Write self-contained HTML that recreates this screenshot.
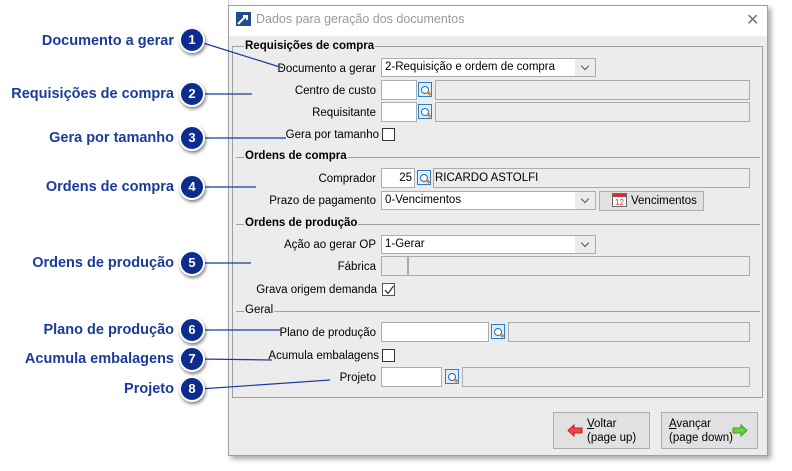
<!DOCTYPE html>
<html><head><meta charset="utf-8"><style>
*{box-sizing:border-box;margin:0;padding:0}
body{width:792px;height:471px;background:#fff;position:relative;overflow:hidden;font-family:"Liberation Sans",sans-serif;font-size:11.5px;color:#000}
.a{position:absolute}
.dlg{left:228px;top:5px;width:540px;height:451px;background:#ececec;border:1px solid #a0a0a0;box-shadow:3px 3px 5px rgba(0,0,0,.35)}
.title{left:229px;top:6px;width:538px;height:30px;background:#fff}
.lbl{position:absolute;text-align:right;width:200px;line-height:14px}
.in{position:absolute;background:#fff;border:1px solid #acacac}
.ro{position:absolute;background:#ececec;border:1px solid #acacac}
.combo{position:absolute;background:#fff;border:1px solid #acacac;padding-left:3px;line-height:16px}
.combo:after{content:"";position:absolute;right:7px;top:4px;width:5px;height:5px;border-right:1px solid #555;border-bottom:1px solid #555;transform:rotate(45deg)}
.combo i{position:absolute;right:0;top:0;bottom:0;width:20px;background:#ececec}
.mag{position:absolute;width:14px;height:15px;border:1px solid #2a7fd4;background:#dbeefc}
.mag:before{content:"";position:absolute;left:2px;top:3px;width:6px;height:6px;border:1.5px solid #2a66b0;border-radius:50%;background:#fff}
.mag:after{content:"";position:absolute;left:8px;top:9px;width:4px;height:3px;background:#e08a20;transform:rotate(45deg)}
.cb{position:absolute;width:13px;height:13px;border:1px solid #333;background:#fff}
.sec{position:absolute;font-weight:bold;background:#ececec;padding:0 1px;line-height:13px}
.hl{position:absolute;height:1px;background:#a0a0a0}
.co{position:absolute;right:618px;color:#1a3b9e;font-weight:bold;font-size:14.5px;white-space:nowrap;line-height:18px}
.bd{position:absolute;width:26px;height:26px;border-radius:50%;background:#0c2d8e;border:2px solid #fff;box-shadow:1px 2px 3px rgba(0,0,0,.5);color:#fff;font-weight:bold;font-size:13px;text-align:center;line-height:22px}
.btn{position:absolute;background:#e1e1e1;border:1px solid #adadad;line-height:14px}
</style></head><body>
<div class="a" style="left:228px;top:0;width:540px;height:5px;border-left:1px dotted #aaa"></div>
<div class="a dlg"></div>
<div class="a title"></div>
<svg class="a" style="left:236px;top:12px" width="15" height="14"><rect width="15" height="14" fill="#1e4e8c"/><path d="M2 12 L10 4 M7 4 H11 V8" stroke="#fff" stroke-width="2" fill="none"/></svg>
<div class="a" style="left:256px;top:12px;color:#999;font-size:12.5px">Dados para geração dos documentos</div>
<div class="a" style="left:746px;top:10px;color:#777;font-size:16px">✕</div>

<div class="a" style="left:232px;top:46px;width:531px;height:352px;border:1px solid #a0a0a0"></div>
<div class="sec" style="left:244px;top:40px">Requisições de compra</div>
<div class="hl" style="left:236px;top:157px;width:524px"></div>
<div class="sec" style="left:244px;top:150px">Ordens de compra</div>
<div class="hl" style="left:236px;top:224px;width:524px"></div>
<div class="sec" style="left:244px;top:217px">Ordens de produção</div>
<div class="hl" style="left:236px;top:311px;width:524px"></div>
<div class="sec" style="left:244px;top:304px;font-weight:normal">Geral</div>

<div class="lbl" style="left:176px;top:62px">Documento a gerar</div>
<div class="combo" style="left:381px;top:58px;width:215px;height:19px">2-Requisição e ordem de compra<i></i></div>
<div class="lbl" style="left:176px;top:84px">Centro de custo</div>
<div class="in" style="left:381px;top:80px;width:36px;height:20px"></div><div class="mag" style="left:418px;top:82px"></div><div class="ro" style="left:435px;top:80px;width:315px;height:20px"></div>
<div class="lbl" style="left:176px;top:106px">Requisitante</div>
<div class="in" style="left:381px;top:102px;width:36px;height:20px"></div><div class="mag" style="left:418px;top:104px"></div><div class="ro" style="left:435px;top:102px;width:315px;height:20px"></div>
<div class="lbl" style="left:179px;top:128px">Gera por tamanho</div>
<div class="cb" style="left:382px;top:128px"></div>

<div class="lbl" style="left:176px;top:172px">Comprador</div>
<div class="in" style="left:381px;top:168px;width:34px;height:20px;text-align:right;padding-right:2px;line-height:18px">25</div><div class="mag" style="left:417px;top:170px"></div><div class="ro" style="left:433px;top:168px;width:317px;height:20px;padding-left:1px;line-height:18px">RICARDO ASTOLFI</div>
<div class="lbl" style="left:176px;top:194px">Prazo de pagamento</div>
<div class="combo" style="left:381px;top:191px;width:215px;height:19px">0-Vencimentos<i></i></div>
<div class="btn" style="left:599px;top:191px;width:105px;height:20px;padding:2px 0 0 31px">Vencimentos</div>
<svg class="a" style="left:612px;top:192px" width="15" height="15"><rect x="0.5" y="1.5" width="14" height="13" fill="#fff" stroke="#666"/><rect x="1" y="2" width="13" height="3" fill="#c33"/><text x="3" y="13" font-size="8" fill="#c33" font-family="Liberation Sans">12</text></svg>

<div class="lbl" style="left:176px;top:238px">Ação ao gerar OP</div>
<div class="combo" style="left:381px;top:235px;width:215px;height:19px">1-Gerar<i></i></div>
<div class="lbl" style="left:176px;top:260px">Fábrica</div>
<div class="ro" style="left:381px;top:256px;width:27px;height:20px"></div><div class="ro" style="left:408px;top:256px;width:342px;height:20px"></div>
<div class="lbl" style="left:177px;top:283px">Grava origem demanda</div>
<div class="cb" style="left:382px;top:283px;border-color:#555"></div>
<svg class="a" style="left:383px;top:284px" width="12" height="12"><path d="M2 6 L5 9.5 L10.5 2" stroke="#333" stroke-width="1.3" fill="none"/></svg>

<div class="lbl" style="left:176px;top:326px">Plano de produção</div>
<div class="in" style="left:381px;top:322px;width:108px;height:20px"></div><div class="mag" style="left:491px;top:324px"></div><div class="ro" style="left:508px;top:322px;width:242px;height:20px"></div>
<div class="lbl" style="left:179px;top:349px">Acumula embalagens</div>
<div class="cb" style="left:382px;top:349px"></div>
<div class="lbl" style="left:176px;top:371px">Projeto</div>
<div class="in" style="left:381px;top:367px;width:61px;height:20px"></div><div class="mag" style="left:445px;top:369px"></div><div class="ro" style="left:462px;top:367px;width:288px;height:20px"></div>

<div class="btn" style="left:553px;top:412px;width:97px;height:37px;padding:4px 0 0 33px"><u>V</u>oltar<br>(page up)</div>
<svg class="a" style="left:567px;top:424px" width="16" height="13"><path d="M1 6.5 L7 1 V4 H15 V9 H7 V12 Z" fill="#f04848" stroke="#c02020"/></svg>
<div class="btn" style="left:661px;top:412px;width:97px;height:37px;padding:4px 0 0 7px"><u>A</u>vançar<br>(page down)</div>
<svg class="a" style="left:732px;top:424px" width="16" height="13"><path d="M15 6.5 L9 1 V4 H1 V9 H9 V12 Z" fill="#6cd040" stroke="#3a9a20"/></svg>

<svg class="a" style="left:0;top:0" width="400" height="471"><g stroke="#1a3b9e" stroke-width="1.2" fill="none">
<path d="M200 42 L283 68"/><path d="M200 94 H252"/><path d="M200 138 H286"/><path d="M200 187 H256"/><path d="M200 263 H251"/><path d="M200 330 L282 330"/><path d="M200 359 L272 360"/><path d="M200 389 L330 380"/></g></svg>
<div class="co" style="top:32px">Documento a gerar</div><div class="bd" style="left:179px;top:27px">1</div>
<div class="co" style="top:85px">Requisições de compra</div><div class="bd" style="left:179px;top:81px">2</div>
<div class="co" style="top:129px">Gera por tamanho</div><div class="bd" style="left:179px;top:125px">3</div>
<div class="co" style="top:178px">Ordens de compra</div><div class="bd" style="left:179px;top:174px">4</div>
<div class="co" style="top:254px">Ordens de produção</div><div class="bd" style="left:179px;top:250px">5</div>
<div class="co" style="top:321px">Plano de produção</div><div class="bd" style="left:179px;top:317px">6</div>
<div class="co" style="top:350px">Acumula embalagens</div><div class="bd" style="left:179px;top:346px">7</div>
<div class="co" style="top:380px">Projeto</div><div class="bd" style="left:179px;top:376px">8</div>
</body></html>
